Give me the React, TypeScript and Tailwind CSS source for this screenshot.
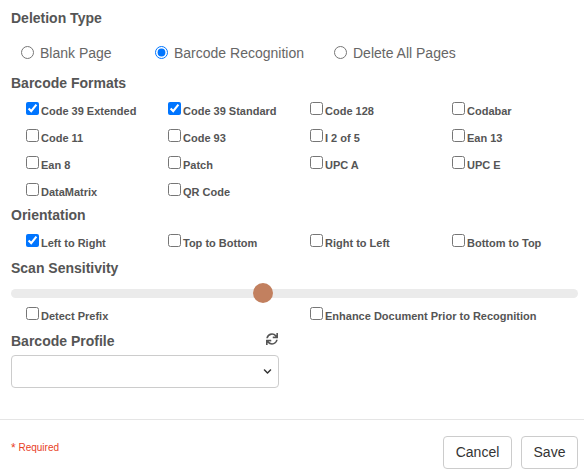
import React from "react";
import { FaSync, FaChevronDown } from "react-icons/fa";

const Check = ({ label, checked = false }: { label: string; checked?: boolean }) => (
  <label className="block h-[16px] text-[11px] font-bold text-[#555] leading-[16px] whitespace-nowrap">
    <input type="checkbox" defaultChecked={checked} className="m-0 mr-[2px] w-[13px] h-[13px] align-baseline accent-[#0075ff]" />
    {label}
  </label>
);

const Radio = ({ label, checked = false }: { label: string; checked?: boolean }) => (
  <label className="block h-[20px] text-[14px] text-[#666] leading-[20px] whitespace-nowrap">
    <input type="radio" name="deltype" defaultChecked={checked} className="m-0 mr-[6px] w-[13px] h-[13px] align-[-1px] accent-[#0075ff]" />
    {label}
  </label>
);

const Heading = ({ children }: { children: React.ReactNode }) => (
  <div className="h-[18px] text-[14px] font-bold text-[#555] leading-[18px]">{children}</div>
);

export default function App() {
  return (
    <div className="w-[584px] h-[476px] bg-white flex flex-col font-['Liberation_Sans',Arial,sans-serif]">
      <div className="h-[419px] px-[11px] pt-[9px] flex flex-col">
        <Heading>Deletion Type</Heading>
        <div className="mt-[16px] pl-[10px] flex">
          <div className="w-[134px]"><Radio label="Blank Page" /></div>
          <div className="w-[179px]"><Radio label="Barcode Recognition" checked /></div>
          <div><Radio label="Delete All Pages" /></div>
        </div>
        <div className="mt-[11px]"><Heading>Barcode Formats</Heading></div>
        <div className="mt-[10px] pl-[15px] grid grid-cols-[142px_142px_142px_142px] gap-y-[11px]">
          <Check label="Code 39 Extended" checked />
          <Check label="Code 39 Standard" checked />
          <Check label="Code 128" />
          <Check label="Codabar" />
          <Check label="Code 11" />
          <Check label="Code 93" />
          <Check label="I 2 of 5" />
          <Check label="Ean 13" />
          <Check label="Ean 8" />
          <Check label="Patch" />
          <Check label="UPC A" />
          <Check label="UPC E" />
          <Check label="DataMatrix" />
          <Check label="QR Code" />
        </div>
        <div className="mt-[7px]"><Heading>Orientation</Heading></div>
        <div className="mt-[10px] pl-[15px] grid grid-cols-[142px_142px_142px_142px]">
          <Check label="Left to Right" checked />
          <Check label="Top to Bottom" />
          <Check label="Right to Left" />
          <Check label="Bottom to Top" />
        </div>
        <div className="mt-[9px]"><Heading>Scan Sensitivity</Heading></div>
        <div className="mt-[6px] relative h-[20px] w-[567px] flex items-center">
          <div className="h-[9px] w-full rounded-full bg-[#ebebeb]" />
          <div className="absolute left-[242px] top-0 w-[20px] h-[20px] rounded-full bg-[#c2805f]" />
        </div>
        <div className="mt-[4px] pl-[15px] grid grid-cols-[284px_284px]">
          <Check label="Detect Prefix" />
          <Check label="Enhance Document Prior to Recognition" />
        </div>
        <div className="mt-[9px] w-[268px] flex items-center justify-between">
          <Heading>Barcode Profile</Heading>
          <FaSync className="text-[#555] w-[12px] h-[12px] mr-[1px] -mt-[5px]" />
        </div>
        <div className="mt-[5px] w-[268px] h-[33px] border border-[#ccc] rounded-[4px] flex items-center justify-end pr-[6px]">
          <FaChevronDown className="text-[#333] w-[9px] h-[9px]" />
        </div>
      </div>
      <div className="flex-1 border-t border-[#e5e5e5] flex items-start justify-between px-[6px] pt-[16px]">
        <div className="pl-[5px] pt-[6px] text-[10px] text-[#e8411f] leading-[12px]">
          <span className="text-[12px] align-top">*</span> Required
        </div>
        <div className="flex gap-[9px]">
          <button className="h-[33px] w-[69px] border border-[#ccc] rounded-[4px] bg-white text-[14px] text-[#333]">Cancel</button>
          <button className="h-[33px] w-[57px] border border-[#ccc] rounded-[4px] bg-white text-[14px] text-[#333]">Save</button>
        </div>
      </div>
    </div>
  );
}
